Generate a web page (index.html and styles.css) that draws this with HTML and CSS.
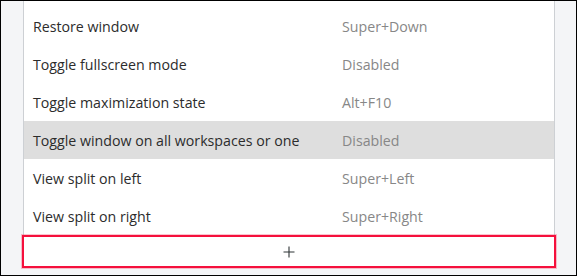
FILE: index.html
```html
<!DOCTYPE html>
<html>
<head>
<meta charset="utf-8">
<link rel="stylesheet" href="styles.css">
</head>
<body>
<div class="frame">
  <div class="list">
    <div class="row"><span class="label">Restore window</span><span class="accel">Super+Down</span></div>
    <div class="row"><span class="label">Toggle fullscreen mode</span><span class="accel">Disabled</span></div>
    <div class="row"><span class="label">Toggle maximization state</span><span class="accel">Alt+F10</span></div>
    <div class="row hover"><span class="label">Toggle window on all workspaces or one</span><span class="accel">Disabled</span></div>
    <div class="row"><span class="label">View split on left</span><span class="accel">Super+Left</span></div>
    <div class="row"><span class="label">View split on right</span><span class="accel">Super+Right</span></div>
  </div>
  <div class="add">
    <svg width="12" height="12" viewBox="0 0 12 12"><path d="M6 0.5V11.5M0.5 6H11.5" stroke="#2e3436" stroke-width="1.1" fill="none"/></svg>
  </div>
</div>
</body>
</html>
```
FILE: styles.css
```css
html, body {
  margin: 0;
  padding: 0;
  background: #ffffff;
}
.frame {
  box-sizing: border-box;
  width: 577px;
  height: 276px;
  border: 1px solid #000;
  background: #f4f5f7;
  padding: 0 20px 0 21px;
  display: flex;
  flex-direction: column;
  font-family: "Open Sans", "Noto Sans", sans-serif;
  font-size: 14.2px;
}
.list {
  background: #fff;
  border-left: 1px solid #cdd0d4;
  border-right: 1px solid #cdd0d4;
  padding-top: 6px;
  margin: 0 1px;
}
.row {
  height: 38px;
  display: grid;
  grid-template-columns: 309px 1fr;
  align-items: center;
  padding-left: 9px;
}
.row.hover {
  background: #dedede;
}
.label {
  color: #2c2c2c;
  white-space: nowrap;
}
.accel {
  color: #878787;
  white-space: nowrap;
}
.add {
  box-sizing: border-box;
  height: 33px;
  border: 2px solid #f5103c;
  box-shadow: 0 0 0 1px rgba(245, 16, 60, 0.25);
  background: #fff;
  display: flex;
  align-items: center;
  justify-content: center;
}
.add svg {
  display: block;
}
```
